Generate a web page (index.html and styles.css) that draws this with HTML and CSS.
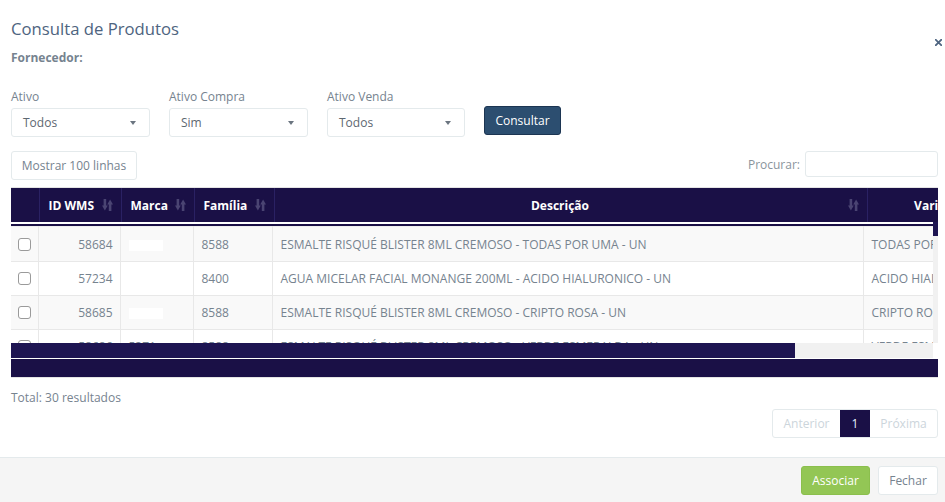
FILE: index.html
```html
<!DOCTYPE html>
<html lang="pt-BR">
<head>
<meta charset="utf-8">
<title>Consulta de Produtos</title>
<link rel="stylesheet" href="styles.css">
</head>
<body>
<div class="modal">
  <div class="modal-header">
    <div class="head-text">
      <h4 class="title">Consulta de Produtos</h4>
      <div class="supplier">Fornecedor:</div>
    </div>
    <button class="close" type="button" aria-label="Fechar">
      <svg width="7" height="7" viewBox="0 0 7 7"><path d="M0.8 0.8L6.2 6.2M6.2 0.8L0.8 6.2" stroke="#4e6480" stroke-width="1.8" stroke-linecap="square"/></svg>
    </button>
  </div>

  <div class="filters">
    <div class="field">
      <label class="field-label">Ativo</label>
      <div class="select"><span>Todos</span><i class="caret"></i></div>
    </div>
    <div class="field">
      <label class="field-label">Ativo Compra</label>
      <div class="select"><span>Sim</span><i class="caret"></i></div>
    </div>
    <div class="field field-narrow">
      <label class="field-label">Ativo Venda</label>
      <div class="select"><span>Todos</span><i class="caret"></i></div>
    </div>
    <button class="btn-primary" type="button">Consultar</button>
  </div>

  <div class="tools">
    <button class="btn-outline" type="button">Mostrar 100 linhas</button>
    <div class="search">
      <span class="search-label">Procurar:</span>
      <input class="search-input" type="text">
    </div>
  </div>

  <div class="dt">
    <div class="dt-head">
      <table class="head-table">
        <colgroup>
          <col class="hc-check"><col class="hc-id"><col class="hc-marca"><col class="hc-fam"><col class="hc-desc"><col class="hc-var">
        </colgroup>
        <thead>
          <tr>
            <th></th>
            <th><div class="th-in"><span class="th-label">ID WMS</span><svg class="sort" width="11" height="12" viewBox="0 0 11 12"><rect x="1.6" y="0" width="2.6" height="8"/><polygon points="0,6.5 5.8,6.5 2.9,11.5"/><rect x="6.8" y="4" width="2.6" height="8"/><polygon points="5.2,5.5 11,5.5 8.1,0.5"/></svg></div></th>
            <th><div class="th-in"><span class="th-label">Marca</span><svg class="sort" width="11" height="12" viewBox="0 0 11 12"><rect x="1.6" y="0" width="2.6" height="8"/><polygon points="0,6.5 5.8,6.5 2.9,11.5"/><rect x="6.8" y="4" width="2.6" height="8"/><polygon points="5.2,5.5 11,5.5 8.1,0.5"/></svg></div></th>
            <th><div class="th-in"><span class="th-label">Família</span><svg class="sort" width="11" height="12" viewBox="0 0 11 12"><rect x="1.6" y="0" width="2.6" height="8"/><polygon points="0,6.5 5.8,6.5 2.9,11.5"/><rect x="6.8" y="4" width="2.6" height="8"/><polygon points="5.2,5.5 11,5.5 8.1,0.5"/></svg></div></th>
            <th><div class="th-in"><span class="th-label th-center">Descrição</span><svg class="sort" width="11" height="12" viewBox="0 0 11 12"><rect x="1.6" y="0" width="2.6" height="8"/><polygon points="0,6.5 5.8,6.5 2.9,11.5"/><rect x="6.8" y="4" width="2.6" height="8"/><polygon points="5.2,5.5 11,5.5 8.1,0.5"/></svg></div></th>
            <th><div class="th-in"><span class="th-label th-center">Variação</span></div></th>
          </tr>
        </thead>
      </table>
    </div>
    <div class="dt-body-wrap">
      <div class="dt-body">
        <table class="body-table">
          <colgroup>
            <col class="bc-check"><col class="bc-id"><col class="bc-marca"><col class="bc-fam"><col class="bc-desc"><col class="bc-var">
          </colgroup>
          <tbody>
            <tr class="odd">
              <td class="c-check"><input type="checkbox" class="cb"></td>
              <td class="c-id">58684</td>
              <td><span class="mask"></span></td>
              <td>8588</td>
              <td>ESMALTE RISQUÉ BLISTER 8ML CREMOSO - TODAS POR UMA - UN</td>
              <td>TODAS POR UMA</td>
            </tr>
            <tr>
              <td class="c-check"><input type="checkbox" class="cb"></td>
              <td class="c-id">57234</td>
              <td></td>
              <td>8400</td>
              <td>AGUA MICELAR FACIAL MONANGE 200ML - ACIDO HIALURONICO - UN</td>
              <td>ACIDO HIALURONICO</td>
            </tr>
            <tr class="odd">
              <td class="c-check"><input type="checkbox" class="cb"></td>
              <td class="c-id">58685</td>
              <td><span class="mask"></span></td>
              <td>8588</td>
              <td>ESMALTE RISQUÉ BLISTER 8ML CREMOSO - CRIPTO ROSA - UN</td>
              <td>CRIPTO ROSA</td>
            </tr>
            <tr>
              <td class="c-check"><input type="checkbox" class="cb"></td>
              <td class="c-id">58686</td>
              <td>5371</td>
              <td>8588</td>
              <td>ESMALTE RISQUÉ BLISTER 8ML CREMOSO - VERDE ESMERALDA - UN</td>
              <td>VERDE ESMERALDA</td>
            </tr>
          </tbody>
        </table>
      </div>
      <div class="vscroll"><div class="vthumb"></div></div>
    </div>
    <div class="hscroll"><div class="hthumb"></div><div class="htrack"></div><div class="hcorner"></div></div>
    <div class="dt-foot"></div>
  </div>

  <div class="total">Total: 30 resultados</div>

  <div class="pager-row">
    <ul class="pager">
      <li class="pg pg-disabled">Anterior</li>
      <li class="pg pg-active">1</li>
      <li class="pg pg-disabled">Próxima</li>
    </ul>
  </div>
</div>

<div class="modal-footer">
  <button class="btn-success" type="button">Associar</button>
  <button class="btn-default" type="button">Fechar</button>
</div>
</body>
</html>
```

FILE: styles.css
```css
* { box-sizing: border-box; }

body {
  margin: 0;
  background: #fff;
  font-family: "Open Sans", "Liberation Sans", sans-serif;
  font-size: 12px;
  color: #76838f;
}

.modal {
  padding: 16px 7px 0 11px;
}

/* header */
.modal-header {
  display: flex;
  justify-content: space-between;
  align-items: flex-start;
}
.title {
  margin: 0;
  font-size: 16.7px;
  line-height: 26px;
  font-weight: 400;
  color: #4e6480;
}
.supplier {
  margin-top: 7px;
  font-size: 12px;
  line-height: 17px;
  font-weight: 700;
  color: #76838f;
}
.close {
  margin-top: 23px;
  margin-right: -4px;
  padding: 0;
  width: 7px;
  height: 7px;
  border: 0;
  background: transparent;
  display: flex;
}

/* filters */
.filters {
  margin-top: 22px;
  display: flex;
  align-items: flex-end;
  gap: 19px;
}
.field {
  width: 139px;
  display: flex;
  flex-direction: column;
}
.field-narrow { width: 138px; }
.field-label {
  font-size: 12px;
  line-height: 17px;
  color: #76838f;
  margin-bottom: 3px;
}
.select {
  height: 29px;
  border: 1px solid #e4eaec;
  border-radius: 3px;
  padding: 0 13px 0 11px;
  display: flex;
  align-items: center;
  justify-content: space-between;
  font-size: 12px;
  color: #5d6771;
}
.caret {
  width: 0;
  height: 0;
  border-top: 4px solid #6b7580;
  border-left: 3.5px solid transparent;
  border-right: 3.5px solid transparent;
}
.btn-primary {
  width: 77px;
  height: 29px;
  margin-bottom: 2px;
  border: 1px solid #1c3552;
  border-radius: 3px;
  background: #2c4e70;
  color: #fff;
  font-family: inherit;
  font-size: 12px;
  padding: 0;
}

/* tools */
.tools {
  margin-top: 14px;
  display: flex;
  justify-content: space-between;
  align-items: flex-start;
}
.btn-outline {
  width: 126px;
  height: 29px;
  border: 1px solid #e4eaec;
  border-radius: 3px;
  background: #fff;
  color: #76838f;
  font-family: inherit;
  font-size: 12px;
  padding: 0;
}
.search {
  display: flex;
  align-items: center;
  gap: 5px;
}
.search-label {
  font-size: 12px;
  color: #8a949c;
}
.search-input {
  width: 133px;
  height: 26px;
  border: 1px solid #e4eaec;
  border-radius: 3px;
  margin: 0;
}

/* data table */
.dt {
  margin-top: 7px;
  width: 927px;
  border-top: 1px solid #e4e4e4;
  border-bottom: 1px solid #e4e4e4;
}
.dt-head {
  overflow: hidden;
  background: #1a1046;
  height: 34px;
}
table {
  border-collapse: collapse;
  table-layout: fixed;
}
.head-table { width: 1012px; }
.hc-check { width: 28px; }
.hc-id { width: 82px; }
.hc-marca { width: 73px; }
.hc-fam { width: 80px; }
.hc-desc { width: 593px; }
.hc-var { width: 156px; }

.head-table th {
  height: 34px;
  padding: 0 8px 0 9px;
  border-left: 1px solid #2a2163;
  color: #fff;
  font-size: 12px;
  font-weight: 700;
  text-align: left;
  white-space: nowrap;
}
.head-table th:first-child { border-left: 0; }
.th-in {
  display: flex;
  align-items: center;
}
.th-label { flex: 1; }
.th-center { text-align: center; padding-right: 11px; }
.sort {
  fill: #4a4472;
  flex: none;
}

.dt-body-wrap {
  display: flex;
  height: 121px;
}
.dt-body {
  flex: 1;
  overflow: hidden;
  margin-top: 2px;
  border-top: 2px solid #1a1046;
}
.body-table { width: 1018px; }
.bc-check { width: 27px; }
.bc-id { width: 82px; }
.bc-marca { width: 73px; }
.bc-fam { width: 79px; }
.bc-desc { width: 591px; }
.bc-var { width: 166px; }

.body-table td {
  height: 34px;
  padding: 0 8px;
  border: 1px solid #e8e8e8;
  font-size: 12px;
  line-height: 17px;
  color: #76838f;
  white-space: nowrap;
  overflow: hidden;
}
.body-table td:first-child { border-left: 0; }
.body-table tr:first-child td { height: 35px; border-top: 1px solid #f0f0f0; }
.body-table tr.odd td { background: #f9f9f9; }
.c-check { text-align: center; padding: 0 !important; }
.c-id { text-align: right; padding-right: 7px !important; }
.cb {
  appearance: none;
  -webkit-appearance: none;
  width: 13px;
  height: 13px;
  margin: 4px 0 0 0;
  border: 1px solid #9a9a9a;
  border-radius: 3px;
  background: #fff;
}
.mask {
  display: inline-block;
  width: 34px;
  height: 11px;
  background: #fff;
  vertical-align: middle;
}

.vscroll {
  width: 5px;
  background: #f1f1f1;
}
.vthumb {
  height: 14px;
  background: #1e1552;
}

.hscroll {
  display: flex;
  height: 15px;
}
.hthumb {
  width: 784px;
  background: #1e1552;
}
.htrack {
  flex: 1;
  background: #f1f1f1;
}
.hcorner {
  width: 5px;
  background: #fff;
}
.dt-foot {
  margin-top: 1px;
  height: 18px;
  background: #1a1046;
}

.total {
  margin-top: 11px;
  line-height: 17px;
  font-size: 12px;
  color: #76838f;
}

.pager-row {
  margin-top: 3px;
  display: flex;
  justify-content: flex-end;
}
.pager {
  list-style: none;
  margin: 0;
  padding: 0;
  display: flex;
  border: 1px solid #e4eaec;
  border-radius: 3px;
  overflow: hidden;
}
.pg {
  height: 27px;
  display: flex;
  align-items: center;
  justify-content: center;
  font-size: 12px;
}
.pg-disabled {
  width: 67px;
  color: #ccd5db;
}
.pg-active {
  width: 30px;
  background: #1a1046;
  color: #e6f3ff;
}

.modal-footer {
  margin-top: 19px;
  border-top: 1px solid #e4eaec;
  background: #f5f5f5;
  height: 46px;
  padding: 8px 7px 0 0;
  display: flex;
  justify-content: flex-end;
  gap: 8px;
}
.btn-success {
  width: 69px;
  height: 29px;
  border: 1px solid #8bbf4d;
  border-radius: 3px;
  background: #93c655;
  color: #fff;
  font-family: inherit;
  font-size: 12px;
  padding: 0;
}
.btn-default {
  width: 60px;
  height: 29px;
  border: 1px solid #e4eaec;
  border-radius: 3px;
  background: #fff;
  color: #76838f;
  font-family: inherit;
  font-size: 12px;
  padding: 0;
}
```
